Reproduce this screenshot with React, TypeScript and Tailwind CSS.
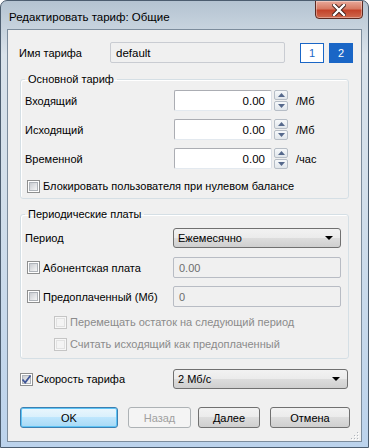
import React from "react";

const font = "font-['Liberation_Sans',Arial,sans-serif]";

function CheckBox({ checked = false, disabled = false }: { checked?: boolean; disabled?: boolean }) {
  return (
    <span
      className={`flex h-[13px] w-[13px] shrink-0 items-center justify-center border ${
        disabled ? "border-[#c5c5c5] bg-[#f7f7f7]" : "border-[#8e8f8f] bg-white"
      }`}
    >
      <span
        className={`flex h-[9px] w-[9px] items-center justify-center border ${
          disabled
            ? "border-[#e2e2e2] bg-[#f4f4f4]"
            : "border-[#aeb3b9] bg-[linear-gradient(135deg,#c9ccd1,#f6f6f6)]"
        }`}
      >
        {checked && (
          <svg width="9" height="9" viewBox="0 0 9 9" className="overflow-visible">
            <path d="M0.5 4.5 L3.2 7.5 L8.5 0.5" fill="none" stroke="#3f5597" strokeWidth="1.8" />
          </svg>
        )}
      </span>
    </span>
  );
}

function Spinner() {
  const btn =
    "flex h-[10px] items-center justify-center rounded-[2px] border border-[#b6bdc6] bg-[linear-gradient(#f6f8fa,#e1e6eb)]";
  return (
    <div className="ml-[2px] flex w-[14px] flex-col gap-[1px]">
      <div className={btn}>
        <svg width="7" height="4" viewBox="0 0 7 4">
          <path d="M0 4 L3.5 0 L7 4Z" fill="#56698c" />
        </svg>
      </div>
      <div className={btn}>
        <svg width="7" height="4" viewBox="0 0 7 4">
          <path d="M0 0 L3.5 4 L7 0Z" fill="#56698c" />
        </svg>
      </div>
    </div>
  );
}

function NumRow({ label, unit }: { label: string; unit: string }) {
  return (
    <div className="flex h-[21px] items-center">
      <span className="w-[153px] pl-[4px]">{label}</span>
      <div className="flex h-[21px] w-[98px] items-center justify-end rounded-[2px] border border-[#abadb3] border-b-[#e3e9ef] border-r-[#dbdfe6] bg-white pr-[6px] text-[11.5px]">
        0.00
      </div>
      <Spinner />
      <span className="ml-[8px]">{unit}</span>
    </div>
  );
}

function Combo({ text, width }: { text: string; width: string }) {
  return (
    <div
      className={`flex h-[20px] ${width} items-center justify-between rounded-[3px] border border-[#707070] bg-[linear-gradient(#f2f2f2_0%,#ebebeb_50%,#dddddd_50%,#cfcfcf_100%)] pl-[4px] pr-[7px]`}
    >
      <span>{text}</span>
      <svg width="8" height="4" viewBox="0 0 8 4">
        <path d="M0 0 L8 0 L4 4Z" fill="#000" />
      </svg>
    </div>
  );
}

function DisabledBox({ text }: { text: string }) {
  return (
    <div className="flex h-[21px] w-[168px] items-center rounded-[2px] border border-[#b8bcc4] bg-[#f0f0f0] pl-[5px] text-[#6d6d6d]">
      {text}
    </div>
  );
}

function CheckRow({ label, checked, disabled }: { label: string; checked?: boolean; disabled?: boolean }) {
  return (
    <div className="flex items-center gap-[3px]">
      <CheckBox checked={checked} disabled={disabled} />
      <span className={disabled ? "text-[#8b8b8b]" : ""}>{label}</span>
    </div>
  );
}

function Button({ label, width, kind }: { label: string; width: string; kind?: "default" | "disabled" }) {
  let cls =
    "border-[#707070] bg-[linear-gradient(#f2f2f2_0%,#ebebeb_50%,#dddddd_50%,#cfcfcf_100%)] text-black";
  if (kind === "default")
    cls =
      "border-[#3c7fb1] bg-[linear-gradient(#eaf6fd_0%,#d9f0fc_50%,#bee6fd_50%,#a7d9f5_100%)] shadow-[inset_0_0_0_1px_#5fc4f5] text-black";
  if (kind === "disabled") cls = "border-[#adb2b5] bg-[#f4f4f4] text-[#a0a0a0]";
  return (
    <div className={`flex h-[21px] ${width} items-center justify-center rounded-[3px] border ${cls}`}>{label}</div>
  );
}

export default function App() {
  return (
    <div
      className={`${font} flex h-[448px] w-[369px] flex-col overflow-hidden rounded-t-[7px] border border-[#4c5d6f] bg-[linear-gradient(180deg,#b4c3d1_0%,#d9e2ea_12%,#d3dfea_40%,#bcd3ec_100%)] text-[11px] leading-[16px] text-black`}
    >
      {/* title bar */}
      <div className="flex h-[28px] items-start">
        <span className="ml-[8px] mt-[8px] text-[11.5px] text-black">Редактировать тариф: Общие</span>
        <div className="ml-auto mr-[5px] mt-[-1px] flex h-[19px] w-[48px] items-center justify-center rounded-b-[4px] border border-[#5c2a21] bg-[linear-gradient(#e9a99a_0%,#d77a63_45%,#c3432a_55%,#cf6a4f_100%)] shadow-[inset_0_0_0_1px_rgba(255,255,255,0.35)]">
          <svg width="14" height="12" viewBox="0 0 14 12">
            <path d="M2 1 L12 11 M12 1 L2 11" stroke="#3b1b16" strokeWidth="4.2" strokeLinecap="square" />
            <path d="M2 1 L12 11 M12 1 L2 11" stroke="#ffffff" strokeWidth="2.4" strokeLinecap="square" />
          </svg>
        </div>
      </div>

      {/* client area */}
      <div className="mx-[6px] mb-[5px] flex flex-1 flex-col border border-[#7c8c9c] bg-[#f0f0f0]">
        {/* tariff name */}
        <div className="mt-[12px] flex h-[21px] items-center">
          <span className="w-[102px] pl-[11px]">Имя тарифа</span>
          <div className="flex h-[21px] w-[175px] items-center rounded-[2px] border border-[#c9ccd2] bg-[#f0f0f0] pl-[5px] text-[11.5px]">
            default
          </div>
          <div className="ml-[15px] flex h-[20px] w-[24px] items-center justify-center border-[1.5px] border-[#1a66c6] bg-white text-[#1a66c6]">
            1
          </div>
          <div className="ml-[5px] flex h-[20px] w-[24px] items-center justify-center bg-[#1a66c6] text-white">
            2
          </div>
        </div>

        {/* main tariff */}
        <fieldset className="mx-[12px] mt-[8px] h-[128px] rounded-[3px] border border-[#d5dfe5] shadow-[inset_1px_1px_0_#ffffff]">
          <legend className="ml-[4px] px-[3px] leading-[16px]">Основной тариф</legend>
          <div className="mt-[3px] flex flex-col gap-[8px]">
            <NumRow label="Входящий" unit="/Мб" />
            <NumRow label="Исходящий" unit="/Мб" />
            <NumRow label="Временной" unit="/час" />
          </div>
          <div className="ml-[6px] mt-[9px]">
            <CheckRow label="Блокировать пользователя при нулевом балансе" />
          </div>
        </fieldset>

        {/* periodic fees */}
        <fieldset className="mx-[12px] mt-[7px] h-[153px] rounded-[3px] border border-[#d5dfe5] shadow-[inset_1px_1px_0_#ffffff]">
          <legend className="ml-[4px] px-[3px] leading-[16px]">Периодические платы</legend>
          <div className="mt-[6px] flex h-[20px] items-center">
            <span className="w-[152px] pl-[4px]">Период</span>
            <Combo text="Ежемесячно" width="w-[168px]" />
          </div>
          <div className="mt-[9px] flex h-[21px] items-center">
            <div className="w-[152px] pl-[6px]">
              <CheckRow label="Абонентская плата" />
            </div>
            <DisabledBox text="0.00" />
          </div>
          <div className="mt-[8px] flex h-[21px] items-center">
            <div className="w-[152px] pl-[6px]">
              <CheckRow label="Предоплаченный (Мб)" />
            </div>
            <DisabledBox text="0" />
          </div>
          <div className="ml-[33px] mt-[7px] flex h-[16px] items-center">
            <CheckRow label="Перемещать остаток на следующий период" disabled />
          </div>
          <div className="ml-[33px] mt-[6px] flex h-[16px] items-center">
            <CheckRow label="Считать исходящий как предоплаченный" disabled />
          </div>
        </fieldset>

        {/* speed */}
        <div className="mt-[10px] flex h-[20px] items-center">
          <div className="w-[165px] pl-[12px]">
            <CheckRow label="Скорость тарифа" checked />
          </div>
          <Combo text="2 Мб/с" width="w-[175px]" />
        </div>

        {/* buttons */}
        <div className="mt-[18px] flex h-[21px] items-center pl-[12px]">
          <Button label="OK" width="w-[98px]" kind="default" />
          <div className="ml-[10px]">
            <Button label="Назад" width="w-[63px]" kind="disabled" />
          </div>
          <div className="ml-[7px]">
            <Button label="Далее" width="w-[62px]" />
          </div>
          <div className="ml-[10px]">
            <Button label="Отмена" width="w-[80px]" />
          </div>
        </div>

        {/* size grip */}
        <div className="mt-auto flex justify-end pb-[1px] pr-[2px]">
          <svg width="9" height="9" viewBox="0 0 9 9">
            {[
              [7, 1],
              [7, 4],
              [4, 4],
              [7, 7],
              [4, 7],
              [1, 7],
            ].map(([x, y], i) => (
              <g key={i}>
                <rect x={x + 1} y={y + 1} width="1" height="1" fill="#ffffff" />
                <rect x={x} y={y} width="1" height="1" fill="#b0b6bd" />
              </g>
            ))}
          </svg>
        </div>
      </div>
    </div>
  );
}
